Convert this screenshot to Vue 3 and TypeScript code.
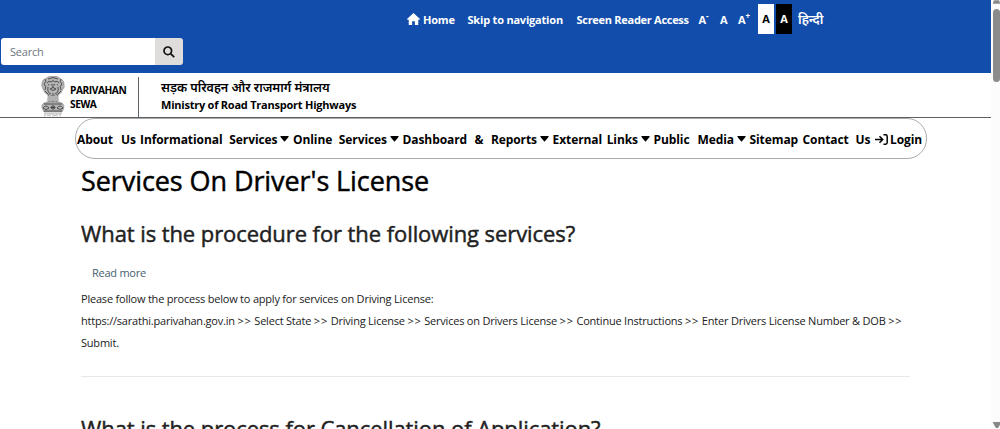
<template>
  <div class="viewport">
    <div class="page">
      <div class="topbar">
        <div class="top-links">
          <a class="home">
            <svg class="home-icon" viewBox="0 0 24 22">
              <path d="M12 0 24 11 22.500 13 20.800 12V22H14.500V15H9.500V22H3.200V12L1.500 13 0 11Z" />
            </svg>
            <span>Home</span>
          </a>
          <a class="skip">Skip to navigation</a>
          <a class="reader">Screen Reader Access</a>
          <a class="size-minus">A<sup>-</sup></a>
          <a class="size-normal">A</a>
          <a class="size-plus">A<sup>+</sup></a>
          <a class="contrast light">A</a>
          <a class="contrast dark">A</a>
          <a class="hindi">हिन्दी</a>
        </div>
        <form class="search" @submit.prevent>
          <input v-model="query" type="text" placeholder="Search" />
          <button type="submit" aria-label="Search">
            <svg viewBox="0 0 12 12">
              <circle cx="4.800" cy="4.800" r="3.800" />
              <path d="M7.600 7.600 11.200 11.200" />
            </svg>
          </button>
        </form>
      </div>

      <header class="brand">
        <svg class="emblem" viewBox="0 0 24 41">
          <g class="stone">
            <path d="M4 3Q7 0 12 0Q17 0 20 3Q23.500 5 23 8Q24 11 22 13Q20 18 17 19L18 27H6L7 19Q3 17 2 13Q0 10 1 7Q1 4 4 3Z" />
            <path d="M3 27Q12 24 21 27Q24 29 22.500 33L21 36H3L1 32Q0 29 3 27Z" />
          </g>
          <g class="carving">
            <path d="M4 3Q6 6 3 8Q6 10 4 14M20 3Q18 6 21 8Q18 10 20 14M7 3Q12 0 17 3M6 7Q8 4 10 6Q12 3 14 6Q16 4 18 7M7 9Q9 7 11 9M13 9Q15 7 17 9M12 8V12M9 13Q12 10 15 13Q12 16 9 13M7 11Q6 17 10 18M17 11Q18 17 14 18M8 18V26M10 19V25M12 17V26M14 19V25M16 18V26M4 15 7 18M20 15 17 18" />
            <path d="M3 28H21M3 35H21M2 32Q5 28 8 32Q5 35 2 32M16 32Q19 28 22 32Q19 35 16 32M12 29V34M9.500 31.500H14.500M10 30 14 33M14 30 10 33" />
          </g>
          <path class="glow" d="M7 20V26M9 19V25M11 20V25M13 20V25M15 19V25M17 20V26M8 8H10M14 8H16" />
          <path class="motto" d="M3 37.800H21M4 38V40.500M6 39.500H8M9 38V40.500M12 38V40.500M13 39.500H15M16 38V40.500M19 38V40.500" />
        </svg>
        <div class="brand-name">
          <span>PARIVAHAN</span>
          <span>SEWA</span>
        </div>
        <div class="ministry">
          <span class="ministry-hi">सड़क परिवहन और राजमार्ग मंत्रालय</span>
          <span class="ministry-en">Ministry of Road Transport Highways</span>
        </div>
      </header>

      <nav class="menu">
        <a v-for="item in menu" :key="item.label" :style="{ width: item.width + 'px' }">
          <svg v-if="item.icon" class="login-icon" viewBox="0 0 13 11">
            <path d="M0 5.500H7.500M4.500 2.300 7.700 5.500 4.500 8.700M8.500 .8H10.500Q12.200 .8 12.200 2.500V8.500Q12.200 10.200 10.500 10.200H8.500" />
          </svg>
          <span class="label">{{ item.label }}</span>
          <svg v-if="item.dropdown" class="caret" viewBox="0 0 9 6">
            <path d="M.8 0H8.200Q9 .2 8.500 1L5 5.300Q4.500 5.700 4 5.300L.5 1Q0 .2 .8 0Z" />
          </svg>
        </a>
      </nav>

      <main class="content">
        <h1>Services On Driver's License</h1>
        <article>
          <h2>What is the procedure for the following services?</h2>
          <a class="read-more">Read more</a>
          <p class="intro">Please follow the process below to apply for services on Driving License:</p>
          <p>
            <template v-for="step in steps" :key="step">{{ step }} <span class="arrows">&gt;&gt;</span>{{ ' ' }}</template>
          </p>
          <p>Submit.</p>
        </article>
        <hr />
        <h2 class="next">What is the process for Cancellation of Application?</h2>
      </main>
    </div>

    <div class="scrollbar">
      <svg class="up" viewBox="0 0 8 4"><path d="M1 0H7L8 3V4H0V3Z" /></svg>
      <div class="thumb"></div>
      <svg class="down" viewBox="0 0 8 6"><path d="M0 0H8V1L5 6H3L0 1Z" /></svg>
    </div>
  </div>
</template>

<script setup lang="ts">
import { ref } from 'vue';

interface MenuItem {
  label: string;
  width: number;
  dropdown?: boolean;
  icon?: boolean;
}

const query = ref('');

const menu: MenuItem[] = [
  { label: 'About Us', width: 59 },
  { label: 'Informational Services', width: 149, dropdown: true },
  { label: 'Online Services', width: 105.5, dropdown: true },
  { label: 'Dashboard & Reports', width: 146, dropdown: true },
  { label: 'External Links', width: 97, dropdown: true },
  { label: 'Public Media', width: 92, dropdown: true },
  { label: 'Sitemap', width: 49 },
  { label: 'Contact Us', width: 68 },
  { label: 'Login', width: 50, icon: true },
];

const steps = [
  'https://sarathi.parivahan.gov.in',
  'Select State',
  'Driving License',
  'Services on Drivers License',
  'Continue Instructions',
  'Enter Drivers License Number & DOB',
];
</script>

<style>
body {
  margin: 0;
  overflow: hidden;
}
</style>

<style scoped>
* {
  box-sizing: border-box;
}

.viewport {
  display: flex;
  width: 1000px;
  height: 429px;
  overflow: hidden;
  background: #fff;
  color: #212121;
  font-family: 'Open Sans', 'Noto Sans', sans-serif;
  font-size: 11px;
}

.page {
  width: 991px;
  height: 429px;
  overflow: hidden;
}

.topbar {
  height: 73px;
  background: #124dab;
}

.top-links {
  display: flex;
  align-items: center;
  height: 38px;
  padding-left: 407px;
  color: #fff;
  font-size: 11px;
  font-weight: 700;
  letter-spacing: -.2px;
  white-space: nowrap;
}

.top-links a {
  flex: none;
}

.home {
  display: flex;
  align-items: center;
  gap: 3px;
  width: 60.500px;
}

.home-icon {
  width: 13px;
  height: 12px;
  fill: #fff;
}

.skip {
  width: 109px;
}

.reader {
  width: 122px;
  letter-spacing: -.28px;
}

.size-minus {
  width: 21.500px;
}

.size-normal {
  width: 18px;
}

.size-plus {
  width: 20px;
}

sup {
  font-size: 8px;
  line-height: 0;
}

.contrast {
  width: 16px;
  height: 30px;
  margin-right: 2px;
  line-height: 30px;
  text-align: center;
}

.light {
  background: #fff;
  color: #000;
}

.dark {
  background: #000;
}

.hindi {
  padding-left: 4px;
  font-size: 13px;
  font-weight: 600;
}

.search {
  display: flex;
  width: 182px;
  height: 27px;
  margin-left: 1px;
}

.search input {
  width: 154px;
  padding: 0 9px;
  border: 0;
  border-radius: 3px 0 0 3px;
  outline: 0;
  font: 11px 'Open Sans', sans-serif;
  letter-spacing: -.2px;
}

.search input::placeholder {
  color: #6c757d;
  opacity: 1;
}

.search button {
  display: flex;
  align-items: center;
  justify-content: center;
  width: 28px;
  padding: 0;
  border: 0;
  border-radius: 0 3px 3px 0;
  background: #dfdcdc;
}

.search svg {
  width: 12px;
  height: 12px;
  fill: none;
  stroke: #111;
  stroke-width: 1.700;
}

.brand {
  display: flex;
  height: 45px;
  padding-left: 41px;
  border-bottom: 1px solid #5c5f63;
  color: #000;
  font-weight: 700;
  white-space: nowrap;
}

.emblem {
  flex: none;
  width: 24px;
  height: 41px;
  margin-top: 3px;
}

.stone {
  fill: #b4b4b4;
  stroke: #888;
  stroke-width: .6;
}

.carving {
  fill: none;
  stroke: #444;
  stroke-width: .9;
}

.glow {
  stroke: #eee;
  stroke-width: .9;
}

.motto {
  fill: none;
  stroke: #999;
  stroke-width: .7;
}

.brand-name {
  display: flex;
  flex-direction: column;
  width: 74px;
  height: 40px;
  margin-top: 4px;
  padding: 6px 0 0 5px;
  border-right: 1px solid #5c6468;
  font-size: 10.200px;
  letter-spacing: -.45px;
  line-height: 14px;
}

.ministry {
  display: flex;
  flex-direction: column;
  padding: 7px 0 0 22px;
  font-size: 11px;
}

.ministry-hi {
  font-size: 12.500px;
  font-weight: 600;
  line-height: 16px;
}

.ministry-en {
  letter-spacing: -.23px;
  line-height: 17px;
}

.menu {
  display: flex;
  align-items: center;
  gap: 4px;
  width: 852px;
  height: 41px;
  margin-left: 75px;
  padding: 1px 0 0 1px;
  border: 1px solid #aaa;
  border-radius: 20px;
  color: #000;
  font-size: 12px;
  font-weight: 700;
  letter-spacing: -.08px;
  white-space: nowrap;
}

.menu a {
  display: flex;
  flex: none;
  align-items: center;
  gap: 2.500px;
}

.label {
  flex: 1;
  min-width: 0;
  text-align: justify;
  text-align-last: justify;
}

.caret {
  width: 9px;
  height: 6px;
}

.login-icon {
  width: 13px;
  height: 11px;
  fill: none;
  stroke: #000;
  stroke-width: 1.500;
}

.content {
  padding-left: 81px;
}

h1,
h2,
p {
  margin: 0;
  white-space: nowrap;
}

h1,
h2 {
  letter-spacing: -.08px;
  -webkit-text-stroke: .45px currentColor;
}

h1 {
  height: 44px;
  color: #000;
  font-size: 27px;
  font-weight: 400;
  line-height: 44px;
}

h2 {
  height: 30px;
  margin-top: 15px;
  font-size: 22px;
  font-weight: 400;
  line-height: 30px;
}

.read-more {
  display: block;
  height: 22px;
  margin-top: 14px;
  padding-left: 11px;
  color: #45606f;
  letter-spacing: -.25px;
  line-height: 22px;
}

p {
  height: 22px;
  letter-spacing: -.21px;
  line-height: 22px;
}

.arrows {
  letter-spacing: .8px;
}

.intro {
  margin-top: 4px;
}

hr {
  width: 829px;
  height: 1px;
  margin: 22px 0 0;
  border: 0;
  background: #e8e8e8;
}

h2.next {
  margin-top: 36px;
}

.scrollbar {
  display: flex;
  flex-direction: column;
  align-items: center;
  width: 9px;
  height: 429px;
  padding-left: 2px;
  background: #fcfcfc;
  fill: #888;
}

.up {
  width: 7px;
  height: 4px;
}

.thumb {
  width: 7px;
  height: 73px;
  margin-top: 5px;
  border-radius: 4px;
  background: #8b8b8b;
}

.down {
  width: 8px;
  height: 6px;
  margin-top: auto;
  margin-bottom: 1px;
}
</style>
